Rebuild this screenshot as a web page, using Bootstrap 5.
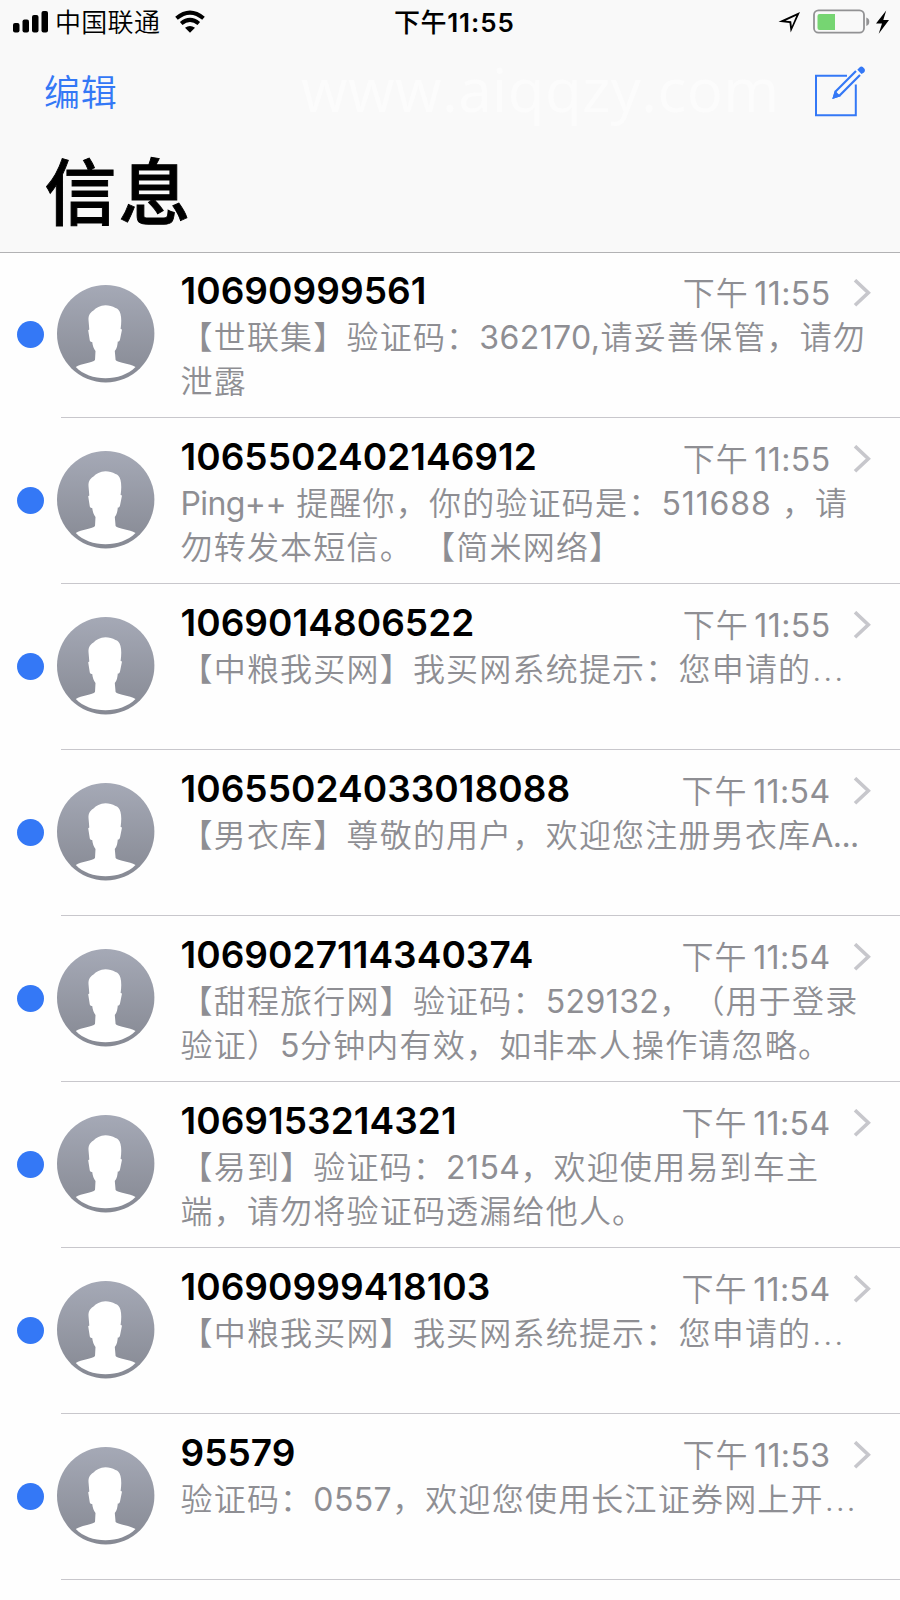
<!DOCTYPE html>
<html lang="zh-CN">
<head>
<meta charset="utf-8">
<meta name="viewport" content="width=device-width, initial-scale=1">
<title>信息</title>
<link href="https://cdn.jsdelivr.net/npm/bootstrap@5.3.0/dist/css/bootstrap.min.css" rel="stylesheet">
<style>
body{width:900px;height:1600px;overflow:hidden;background:#fefefe;color:#000;font-family:Inter,"Noto Sans CJK SC",sans-serif;white-space:nowrap;text-spacing-trim:space-all}
.top-area{height:253px;background:#f9f9f9;border-bottom:1px solid #b2b2b4}
.status{height:44px;padding:0 11px 0 13px;font-size:26px;line-height:46px}
.status .side{width:381px}
.carrier{font-weight:350;letter-spacing:.3px;margin-left:7px}
.wifi{margin-left:14.5px}
.clock{font-weight:500;letter-spacing:.6px}
.clock .num{font-weight:600;letter-spacing:.9px}
.tools{height:96px;padding:0 34px 0 44px}
.edit{color:#3478f6;font-size:36px;letter-spacing:.8px;line-height:98px;text-decoration:none;font-weight:350;width:257px}
.site{font:400 60px/90px "Open Sans","Noto Sans",sans-serif;color:#fcfcfc;letter-spacing:.5px}
.big-title{font-size:72px;line-height:106px;font-weight:500;margin:0 0 0 44.5px;letter-spacing:2px;-webkit-text-stroke:.9px #000}
.threads{margin-top:-1px}
.thread{height:166px;padding-left:17px;position:relative}
.thread::after{content:"";position:absolute;left:61px;right:0;bottom:0;height:1px;background:#c8c7cc}
.dot{width:27px;height:27px;background:#3478f6;margin-top:69px}
.avatar{width:98px;height:98px;margin:33px 26px 0 12.5px}
.body-col{padding-top:18px}
.head-line{height:42px;padding-right:29.5px}
.who{font-size:37px;font-weight:600;line-height:42px;letter-spacing:.05px}
.when{font-size:32px;line-height:44px;color:#8e8e93;font-weight:350;letter-spacing:1px;word-spacing:-4.5px;padding-top:5px}
.when .num{font-weight:400;letter-spacing:.4px}
.chev{width:18px;height:28px;margin:3px 0 0 22px}
.preview{font-size:32px;line-height:43.5px;color:#8e8e93;font-weight:350;letter-spacing:1.2px;padding-top:4px}
.preview .num{font-weight:400;letter-spacing:.4px}
.preview .wide{letter-spacing:.9px}
.preview .etc{letter-spacing:1.9px;margin-left:1px}
.preview .tight{letter-spacing:-.6px}
</style>
</head>
<body>
<svg width="0" height="0" class="position-absolute">
<defs>
<linearGradient id="g" x1="0" y1="0" x2="0" y2="1"><stop offset="0" stop-color="#a5a9b6"/><stop offset="1" stop-color="#868993"/></linearGradient>
<symbol id="person" viewBox="0 0 98 98"><circle cx="48.7" cy="48.7" r="48.7" fill="url(#g)"/><path fill="#fff" d="M48.5 20.2C43 20.6 39 22.500 36.500 25.500C32 28.500 31.500 31 31.500 35L32.300 44.500L31.200 45.200L32.800 55.500Q33.500 57.200 35.200 57C35.800 61 36.500 63.500 38.500 66L38 75C36 77.500 24 78.500 18.800 82C26 89.500 37 93.300 48.500 93.300S71 89.500 78.500 82C73 78.500 60.500 77.500 58.600 75L57.800 66C60 63.500 60.500 60 60.800 56.500C62 57 62.800 55.500 63 54.500L65 44.500L63.600 44C64.500 38 64.500 33 63.500 29C62.500 25 60.500 23.500 58.500 23C55.500 21 52 20.200 48.500 20.200Z"/></symbol>
<symbol id="next" viewBox="0 0 18 28"><path d="M2 1.200L15.300 13.700L2 26.200" fill="none" stroke="#c7c7cc" stroke-width="3.600"/></symbol>
</defs>
</svg>
<header class="top-area">
<div class="status d-flex align-items-start">
<div class="side d-flex align-items-start">
<svg width="35" height="44"><rect x="0" y="23" width="6.500" height="9.500" rx="2"/><rect x="9.500" y="19.500" width="6.500" height="13" rx="2"/><rect x="19" y="15" width="6.500" height="17.500" rx="2"/><rect x="28.500" y="11" width="6.500" height="21.500" rx="2"/></svg>
<span class="carrier">中国联通</span>
<svg class="wifi" width="30" height="44"><g fill="none" stroke="#000" stroke-width="4"><path d="M1.500 18.300Q15 7 28.500 18.300"/><path d="M6.200 23.500Q15 16.200 23.800 23.500"/></g><path d="M10 27.800Q15 24 20 27.800L15 32.700Z"/></svg>
</div>
<span class="clock">下午<span class="num">11:55</span></span>
<div class="d-flex ms-auto">
<svg width="112" height="44" viewBox="777 0 112 44"><path fill-rule="evenodd" d="M778.500 21.800L800 12L790.700 32.500L789.500 23ZM785.500 20.800L791.200 21.300L791.800 26.300L796.300 15.700Z"/><rect x="814" y="10.300" width="50" height="22.400" rx="4.500" fill="none" stroke="#929294" stroke-width="1.800"/><path d="M819.500 14H835V30H819.500Q817.500 30 817.500 28V16Q817.500 14 819.500 14Z" fill="#76d572"/><path d="M866.300 17.500Q869.300 18.500 869.300 21.700T866.300 26Z" fill="#929294"/><path d="M886.200 10.500L876 23.600H882L878.700 33.800L889 20H883.300Z"/></svg>
</div>
</div>
<div class="tools d-flex align-items-start">
<a href="#" class="edit">编辑</a><span class="site">www.aiqqzy.com</span>
<svg class="ms-auto" width="52" height="96" viewBox="814 44 52 96"><g fill="none" stroke="#3478f6" stroke-width="2"><path d="M847 75.800H816V115.200H855.800V84.500"/><path d="M856 71L835.800 91.300L834 97.300L839.800 95.200L860 75" stroke-width="2.200"/></g><path d="M832.300 99L834.800 90.500L840.700 96.200Z" fill="#3478f6"/><path d="M857.300 69.800L859.500 67.500Q861 66 862.800 67L864.700 69Q865.500 71 864 72.500L861.500 74Z" fill="#3478f6"/></svg>
</div>
<h1 class="big-title">信息</h1>
</header>
<main class="threads">
<section class="thread d-flex"><i class="dot rounded-circle"></i><svg class="avatar"><use href="#person"/></svg><div class="body-col flex-grow-1"><div class="head-line d-flex align-items-center"><span class="who">10690999561</span><span class="when ms-auto">下午 <span class="num">11:55</span></span><svg class="chev"><use href="#next"/></svg></div><div class="preview">【世联集】验证码：<span class="num">362170,</span>请妥善保管，请勿<br>泄露</div></div></section>
<section class="thread d-flex"><i class="dot rounded-circle"></i><svg class="avatar"><use href="#person"/></svg><div class="body-col flex-grow-1"><div class="head-line d-flex align-items-center"><span class="who">1065502402146912</span><span class="when ms-auto">下午 <span class="num">11:55</span></span><svg class="chev"><use href="#next"/></svg></div><div class="preview"><span class="num tight">Ping++</span> 提醒你，你的验证码是：<span class="num wide">511688</span> ，请<br>勿转发本短信。 【简米网络】</div></div></section>
<section class="thread d-flex"><i class="dot rounded-circle"></i><svg class="avatar"><use href="#person"/></svg><div class="body-col flex-grow-1"><div class="head-line d-flex align-items-center"><span class="who">1069014806522</span><span class="when ms-auto">下午 <span class="num">11:55</span></span><svg class="chev"><use href="#next"/></svg></div><div class="preview">【中粮我买网】我买网系统提示：您申请的<span class="etc">...</span></div></div></section>
<section class="thread d-flex"><i class="dot rounded-circle"></i><svg class="avatar"><use href="#person"/></svg><div class="body-col flex-grow-1"><div class="head-line d-flex align-items-center"><span class="who">10655024033018088</span><span class="when ms-auto">下午 <span class="num">11:54</span></span><svg class="chev"><use href="#next"/></svg></div><div class="preview">【男衣库】尊敬的用户，欢迎您注册男衣库<span class="num tight">A...</span></div></div></section>
<section class="thread d-flex"><i class="dot rounded-circle"></i><svg class="avatar"><use href="#person"/></svg><div class="body-col flex-grow-1"><div class="head-line d-flex align-items-center"><span class="who">1069027114340374</span><span class="when ms-auto">下午 <span class="num">11:54</span></span><svg class="chev"><use href="#next"/></svg></div><div class="preview">【甜程旅行网】验证码：<span class="num">529132</span>，（用于登录<br>验证）<span class="num">5</span>分钟内有效，如非本人操作请忽略。</div></div></section>
<section class="thread d-flex"><i class="dot rounded-circle"></i><svg class="avatar"><use href="#person"/></svg><div class="body-col flex-grow-1"><div class="head-line d-flex align-items-center"><span class="who">1069153214321</span><span class="when ms-auto">下午 <span class="num">11:54</span></span><svg class="chev"><use href="#next"/></svg></div><div class="preview">【易到】验证码：<span class="num">2154</span>，欢迎使用易到车主<br>端，请勿将验证码透漏给他人。</div></div></section>
<section class="thread d-flex"><i class="dot rounded-circle"></i><svg class="avatar"><use href="#person"/></svg><div class="body-col flex-grow-1"><div class="head-line d-flex align-items-center"><span class="who">10690999418103</span><span class="when ms-auto">下午 <span class="num">11:54</span></span><svg class="chev"><use href="#next"/></svg></div><div class="preview">【中粮我买网】我买网系统提示：您申请的<span class="etc">...</span></div></div></section>
<section class="thread d-flex"><i class="dot rounded-circle"></i><svg class="avatar"><use href="#person"/></svg><div class="body-col flex-grow-1"><div class="head-line d-flex align-items-center"><span class="who">95579</span><span class="when ms-auto">下午 <span class="num">11:53</span></span><svg class="chev"><use href="#next"/></svg></div><div class="preview">验证码：<span class="num">0557</span>，欢迎您使用长江证券网上开<span class="etc">...</span></div></div></section>
</main>
<script src="https://cdn.jsdelivr.net/npm/bootstrap@5.3.0/dist/js/bootstrap.bundle.min.js"></script>
</body>
</html>
